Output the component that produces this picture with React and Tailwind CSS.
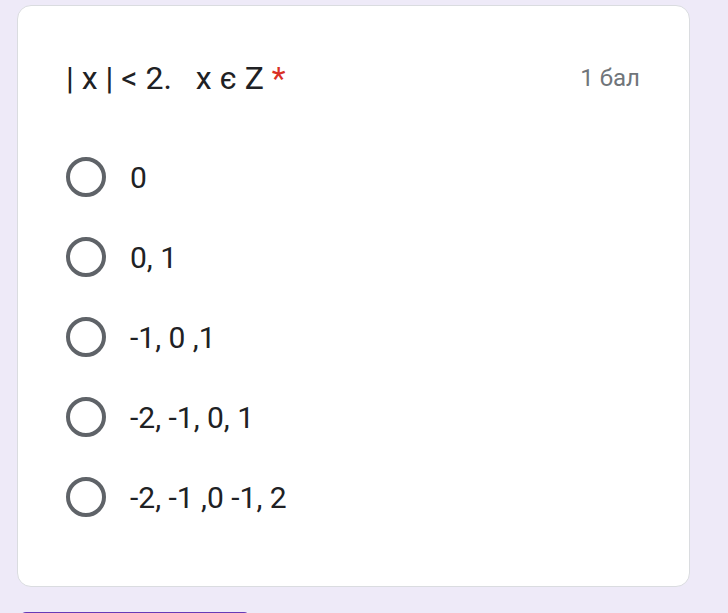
import React from "react";

const options = ["0", "0, 1", "-1, 0 ,1", "-2, -1, 0, 1", "-2, -1 ,0 -1, 2"];

export default function App() {
  return (
    <div
      className="w-[728px] h-[613px] overflow-hidden bg-[#eeeaf8] pt-[5px] pl-[17px]"
      style={{ fontFamily: "Roboto, 'Liberation Sans', sans-serif" }}
    >
      <div className="w-[673px] h-[582px] bg-white border border-[#dadce0] rounded-[14px] px-[48px] pt-[54px] flex flex-col">
        <div className="flex items-center justify-between h-[36px]">
          <div className="text-[32px] leading-[36px] text-[#202124] whitespace-pre">
            {"| x | < 2.   x є Z "}
            <span className="text-[#d93025]">*</span>
          </div>
          <div className="text-[24px] text-[#70757a] pr-[1px]">1 бал</div>
        </div>
        <div className="flex flex-col mt-[41px]">
          {options.map((o) => (
            <div key={o} className="h-[80px] flex items-center gap-[24px]">
              <div className="w-[40px] h-[40px] rounded-full border-[4px] border-[#5f6368] shrink-0" />
              <div className="text-[30px] text-[#202124]">{o}</div>
            </div>
          ))}
        </div>
      </div>
      <div className="mt-[25px] ml-[3px] w-[230px] h-[40px] bg-[#673ab7] rounded-t-[6px]" />
    </div>
  );
}
